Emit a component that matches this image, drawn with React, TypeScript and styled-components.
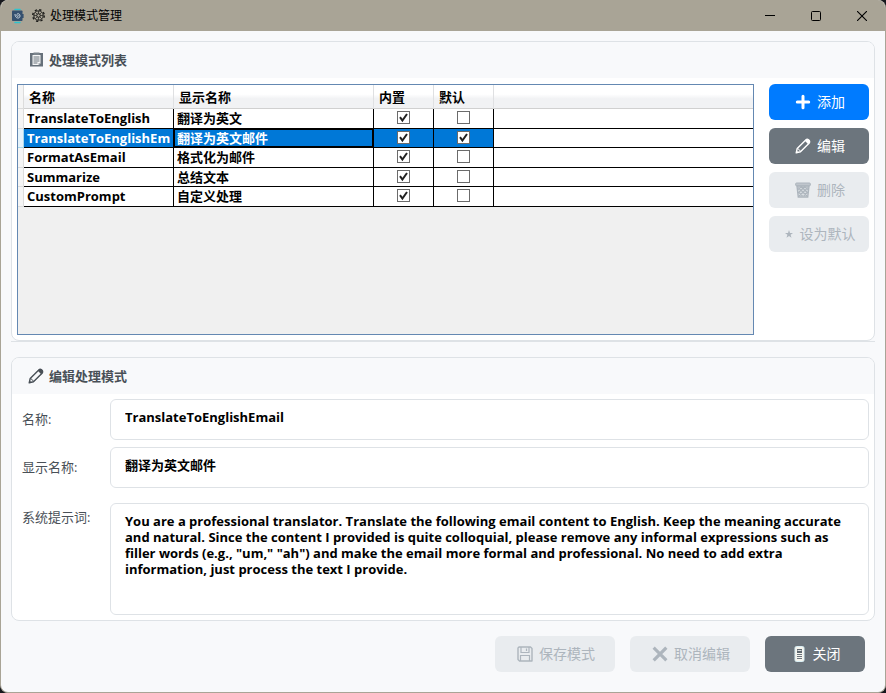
import React, { useState } from "react";
import styled, { createGlobalStyle, css } from "styled-components";

const GlobalStyle = createGlobalStyle`
  *, *::before, *::after { box-sizing: border-box; }
  body {
    margin: 0;
    background: #16181d;
    font-family: "Open Sans", "Noto Sans CJK SC", sans-serif;
    font-size: 13px;
    color: #000;
  }
  button, input, textarea { font-family: inherit; }
`;

const Window = styled.div`
  display: flex;
  flex-direction: column;
  min-height: 100vh;
  border: 1px solid #a9a496;
  border-top: 0;
  border-radius: 8px;
  overflow: hidden;
  background: #f8f9fb;
`;

const TitleBar = styled.header`
  display: flex;
  align-items: center;
  height: 31px;
  padding-left: 11px;
  background: #a9a496;
`;

const Title = styled.h1`
  flex: 1;
  display: flex;
  align-items: center;
  gap: 5px;
  margin: 0 0 0 8px;
  font-size: 12px;
  line-height: 18px;
  font-weight: 400;
`;

const CaptionButton = styled.button`
  display: grid;
  place-items: center;
  width: 46px;
  height: 31px;
  padding: 0;
  border: 0;
  background: none;
  color: #000;
`;

const Content = styled.main`
  flex: 1;
  display: flex;
  flex-direction: column;
  padding: 10px 10px 20px;
`;

const ListPane = styled.div`
  flex: 1;
  display: flex;
  flex-direction: column;
  margin-bottom: 15px;
  border-bottom: 1px solid #dee2e6;
`;

const Card = styled.section<{ $grow?: boolean }>`
  display: flex;
  flex-direction: column;
  flex: ${(p) => (p.$grow ? "1" : "none")};
  border: 1px solid #dee2e6;
  border-radius: 8px;
  overflow: hidden;
  background: #fff;
`;

const CardTitle = styled.h2`
  display: flex;
  align-items: center;
  gap: 5px;
  height: 36px;
  margin: 0;
  padding: 0 16px 1px;
  background: #f8f9fb;
  color: #495057;
  font-size: 13px;
  line-height: 18px;
  font-weight: 700;
`;

const ListBody = styled.div`
  flex: 1;
  display: flex;
  gap: 15px;
  padding: 6px 5px 5px;
`;

const GridFrame = styled.div`
  flex: 1;
  min-width: 0;
  border: 1px solid #6488b2;
  background: #f0f0f0;
`;

const Grid = styled.table`
  width: 100%;
  table-layout: fixed;
  border-collapse: separate;
  border-spacing: 0;
  font-weight: 700;
`;

const HeadCell = styled.th`
  height: 24px;
  padding: 0 5px;
  border-right: 1px solid #dfe0e2;
  border-bottom: 1px solid #d0d0d0;
  background: linear-gradient(#fff 0%, #fff 40%, #f1f2f4 60%, #f1f2f4 100%);
  text-align: left;
  font-size: 13px;
  line-height: 18px;
  font-weight: 700;
  &:last-child { border-right: 0; }
`;

const RowHead = styled.th`
  padding: 0;
  border-right: 1px solid #dcdcdc;
  border-bottom: 1px solid #dcdcdc;
  background: #f5f5f5;
`;

const Row = styled.tr<{ $selected: boolean }>`
  height: 20px;
  &:nth-child(even) { height: 19px; }
  ${(p) =>
    p.$selected &&
    css`
      color: #fff;
      td:not(:last-child) { background: #0078d7; }
      ${RowHead} { background: #e5f3fb; border-color: #a8d8eb; }
    `}
`;

const Cell = styled.td<{ $focus?: boolean }>`
  padding: 0 0 0 3px;
  border-right: 1px solid #000;
  border-bottom: 1px solid #000;
  background: #fff;
  line-height: 18px;
  white-space: nowrap;
  vertical-align: top;
  ${(p) => p.$focus && "box-shadow: inset 0 0 0 1px #000;"}
  &:last-child { border-right: 0; }
`;

const CheckCell = styled(Cell)`
  padding: 2px 0 0;
  text-align: center;
  line-height: 0;
`;

const tick =
  "data:image/svg+xml,%3Csvg xmlns='http://www.w3.org/2000/svg' viewBox='0 0 11 11'%3E%3Cpath d='M2 5.2L4.4 8.6L9 2' fill='none' stroke='%23222' stroke-width='2'/%3E%3C/svg%3E";

const CheckBox = styled.input`
  appearance: none;
  width: 13px;
  height: 13px;
  margin: 0;
  vertical-align: top;
  border: 1px solid #6b6b6b;
  background: #fff;
  &:checked { background: #fff url("${tick}") center / 11px 11px no-repeat; }
`;

const Actions = styled.div`
  display: flex;
  flex-direction: column;
  gap: 8px;
  width: 100px;
`;

const tones = {
  primary: "#007bff",
  secondary: "#6c757d",
};

const Button = styled.button<{ $tone?: keyof typeof tones; $width?: number }>`
  display: flex;
  align-items: center;
  justify-content: center;
  gap: 6px;
  width: ${(p) => p.$width ?? 100}px;
  height: 36px;
  padding: 0 0 0 2px;
  border: 0;
  border-radius: 6px;
  background: ${(p) => tones[p.$tone ?? "secondary"]};
  color: #fff;
  font-size: 14px;
  line-height: 20px;
  &:disabled {
    background: #e9ecef;
    color: #adb5bd;
  }
`;

const Form = styled.form`
  display: grid;
  grid-template-columns: 88px 1fr;
  row-gap: 7px;
  padding: 5px 5px 5px 10px;
`;

const Label = styled.label<{ $top?: boolean }>`
  color: #495057;
  line-height: 18px;
  padding-top: ${(p) => (p.$top ? 13 : 11)}px;
`;

const fieldStyle = css`
  width: 100%;
  border: 1px solid #dee2e6;
  border-radius: 6px;
  background: #fff;
  color: #000;
  font-size: 13px;
  font-weight: 700;
  outline: 0;
`;

const TextInput = styled.input`
  ${fieldStyle}
  height: 41px;
  padding: 0 14px 6px;
`;

const TextArea = styled.textarea`
  ${fieldStyle}
  display: block;
  height: 112px;
  margin-top: 8px;
  padding: 9px 14px;
  line-height: 16px;
  resize: none;
`;

const Footer = styled.footer`
  display: flex;
  justify-content: flex-end;
  gap: 15px;
  padding: 15px 10px 0;
`;

const AppIcon = () => (
  <svg width="12" height="16" viewBox="0 0 12 16" aria-hidden="true">
    <path d="M3 1.500h5M3 14.500h5" stroke="#2fc4cf" strokeWidth="1.600" strokeLinecap="round" />
    <rect x="0" y="2.500" width="10.500" height="10.500" rx=".8" fill="#35506f" />
    <path d="M10 6h1.600v4H10z" fill="#35506f" />
    <path d="M3 6c0 5 5 5 5 2C8 5 4.500 5 4.800 7.500C5 9 6.500 8.500 6.500 7.500" fill="none" stroke="#c8d3dd" />
  </svg>
);

const GearIcon = () => (
  <svg width="13" height="13" viewBox="0 0 13 13" fill="none" stroke="#1c1c1a" aria-hidden="true">
    <circle cx="6.500" cy="6.500" r="4.700" />
    <circle cx="6.500" cy="6.500" r="1.800" />
    <circle cx="6.500" cy="6.500" r="5.800" strokeWidth="1.400" strokeDasharray="2.280 2.280" />
    <path d="M6.500 2v2.700M6.500 8.300V11M2 6.500h2.700M8.300 6.500H11M3.500 3.500l1.800 1.800M7.700 7.700l1.800 1.800M9.500 3.500L7.700 5.300M5.300 7.700L3.500 9.500" strokeWidth=".7" />
  </svg>
);

const ClipboardIcon = () => (
  <svg width="16" height="15" viewBox="0 0 16 15" aria-hidden="true">
    <rect x="2" y="1" width="13" height="13.500" fill="#66707a" />
    <path d="M4.500 3h8v8.500l-2 1.500h-6z" fill="#f4f5f6" />
    <path d="M5.500 .5h6V3h-6z" fill="#7b848c" />
    <path d="M5.500 5h6M5.500 7h6M5.500 9h6M5.500 11h4" stroke="#6b747c" />
    <path d="M10.500 13v-2h2z" fill="#a5abb1" />
  </svg>
);

const PencilIcon = () => (
  <svg width="16" height="16" viewBox="0 0 16 16" fill="none" stroke="currentColor" aria-hidden="true">
    <path d="M1.200 14.800L2.200 10.500L11 1.700Q12.300.8 13.700 2.100Q15.200 3.500 14.300 4.900L5.500 13.700Z" strokeWidth="1.400" strokeLinejoin="round" />
    <path d="M9.800 2.800L12 1Q14.900 1.100 15 4L13.200 6.200Z" fill="currentColor" stroke="none" />
    <path d="M2.200 10.500Q4 10.500 3.900 12Q5.500 12 5.500 13.700" strokeWidth=".8" />
    <path d="M1 15l.6-2.500 1.900 1.900z" fill="currentColor" stroke="none" />
  </svg>
);

const PlusIcon = () => (
  <svg width="16" height="16" viewBox="0 0 16 16" aria-hidden="true">
    <path d="M8 2.300v11.400M2.300 8h11.400" stroke="currentColor" strokeWidth="3" strokeLinecap="round" />
  </svg>
);

const TrashIcon = () => (
  <svg width="16" height="16" viewBox="0 0 16 16" fill="none" stroke="currentColor" aria-hidden="true">
    <rect x=".7" y="1" width="14.600" height="2.800" rx=".8" fill="currentColor" fillOpacity=".7" />
    <path d="M2 4l1.300 11h9.400L14 4z" strokeWidth="1.400" fill="currentColor" fillOpacity=".25" />
    <path d="M3 5.500l9 8.500M6 4.500l7 6.500M9.500 4.500l4 3.500M3.500 10l4 4M13 5.500L4 14M10 4.500L3 11M6.500 4.500L2.500 8M12.700 10l-4 4" strokeWidth="1.100" />
  </svg>
);

const StarIcon = () => (
  <svg width="9" height="8" viewBox="0 0 9 8" aria-hidden="true">
    <path d="M4 0l1 2.900h3L5.600 4.700l.9 3L4 6 1.500 7.700l.9-3L0 2.900h3z" fill="currentColor" />
  </svg>
);

const SaveIcon = () => (
  <svg width="16" height="16" viewBox="0 0 16 16" fill="none" stroke="currentColor" aria-hidden="true">
    <path d="M2 1h11.500L15 2.500V15H2.500L1 13.500V2z" strokeWidth="1.400" strokeLinejoin="round" />
    <path d="M4 1v5.500h8V1M3.500 15V9.500h9V15M9.500 2.500v2.500" strokeWidth="1.200" />
  </svg>
);

const CrossIcon = () => (
  <svg width="16" height="16" viewBox="0 0 16 16" aria-hidden="true">
    <path d="M2.800 2.800l10.400 10.400M13.200 2.800L2.800 13.200" stroke="currentColor" strokeWidth="3.200" strokeLinecap="square" />
  </svg>
);

const DoorIcon = () => (
  <svg width="15" height="16" viewBox="0 0 15 16" aria-hidden="true">
    <rect x="3" y=".5" width="9" height="15" rx="1.500" fill="#f5f5ef" stroke="#d9eef4" />
    <rect x="5" y="3" width="5" height="4" fill="#5f686f" />
    <path d="M5.500 4.500h4" stroke="#d9dde0" />
    <path d="M5 8.500h5M5 10.500h5M5 12.500h5" stroke="#6c757d" />
  </svg>
);

const modes = [
  { name: "TranslateToEnglish", label: "翻译为英文", isDefault: false },
  { name: "TranslateToEnglishEmail", label: "翻译为英文邮件", isDefault: true },
  { name: "FormatAsEmail", label: "格式化为邮件", isDefault: false },
  { name: "Summarize", label: "总结文本", isDefault: false },
  { name: "CustomPrompt", label: "自定义处理", isDefault: false },
];

// The name column has room for this many whole characters.
const NAME_COLUMN_CHARS = 20;

const prompt =
  'You are a professional translator. Translate the following email content to English. Keep the meaning accurate and natural. Since the content I provided is quite colloquial, please remove any informal expressions such as filler words (e.g., "um," "ah") and make the email more formal and professional. No need to add extra information, just process the text I provide.';

export default function App() {
  const [selected, setSelected] = useState(1);
  const mode = modes[selected];

  return (
    <>
      <GlobalStyle />
      <Window>
        <TitleBar>
          <AppIcon />
          <Title>
            <GearIcon />
            处理模式管理
          </Title>
          <CaptionButton aria-label="最小化">
            <svg width="10" height="10" viewBox="0 0 10 10">
              <path d="M0 4.500h10" stroke="currentColor" />
            </svg>
          </CaptionButton>
          <CaptionButton aria-label="最大化">
            <svg width="10" height="10" viewBox="0 0 10 10">
              <rect x=".5" y=".5" width="9" height="9" rx="1" fill="none" stroke="currentColor" />
            </svg>
          </CaptionButton>
          <CaptionButton aria-label="关闭窗口">
            <svg width="10" height="10" viewBox="0 0 10 10">
              <path d="M0 0l10 10M10 0L0 10" stroke="currentColor" strokeWidth="1.100" />
            </svg>
          </CaptionButton>
        </TitleBar>

        <Content>
          <ListPane>
            <Card $grow>
              <CardTitle>
                <ClipboardIcon />
                处理模式列表
              </CardTitle>
              <ListBody>
                <GridFrame>
                  <Grid>
                    <colgroup>
                      <col width="6" />
                      <col width="150" />
                      <col width="200" />
                      <col width="60" />
                      <col width="60" />
                      <col />
                    </colgroup>
                    <thead>
                      <tr>
                        <RowHead />
                        <HeadCell>名称</HeadCell>
                        <HeadCell>显示名称</HeadCell>
                        <HeadCell>内置</HeadCell>
                        <HeadCell>默认</HeadCell>
                        <HeadCell />
                      </tr>
                    </thead>
                    <tbody>
                      {modes.map((m, i) => (
                        <Row key={m.name} $selected={i === selected} onClick={() => setSelected(i)}>
                          <RowHead />
                          <Cell title={m.name}>{m.name.slice(0, NAME_COLUMN_CHARS)}</Cell>
                          <Cell $focus={i === selected}>{m.label}</Cell>
                          <CheckCell>
                            <CheckBox type="checkbox" aria-label={`${m.label} 内置`} checked readOnly />
                          </CheckCell>
                          <CheckCell>
                            <CheckBox type="checkbox" aria-label={`${m.label} 默认`} checked={m.isDefault} readOnly />
                          </CheckCell>
                          <Cell />
                        </Row>
                      ))}
                    </tbody>
                  </Grid>
                </GridFrame>
                <Actions>
                  <Button $tone="primary"><PlusIcon />添加</Button>
                  <Button><PencilIcon />编辑</Button>
                  <Button disabled><TrashIcon />删除</Button>
                  <Button disabled><StarIcon />设为默认</Button>
                </Actions>
              </ListBody>
            </Card>
          </ListPane>

          <Card>
            <CardTitle>
              <PencilIcon />
              编辑处理模式
            </CardTitle>
            <Form>
              <Label htmlFor="mode-name">名称:</Label>
              <TextInput id="mode-name" value={mode.name} readOnly />
              <Label htmlFor="mode-label">显示名称:</Label>
              <TextInput id="mode-label" value={mode.label} readOnly />
              <Label htmlFor="mode-prompt" $top>系统提示词:</Label>
              <TextArea id="mode-prompt" value={prompt} readOnly />
            </Form>
          </Card>

          <Footer>
            <Button $width={120} disabled><SaveIcon />保存模式</Button>
            <Button $width={120} disabled><CrossIcon />取消编辑</Button>
            <Button><DoorIcon />关闭</Button>
          </Footer>
        </Content>
      </Window>
    </>
  );
}
